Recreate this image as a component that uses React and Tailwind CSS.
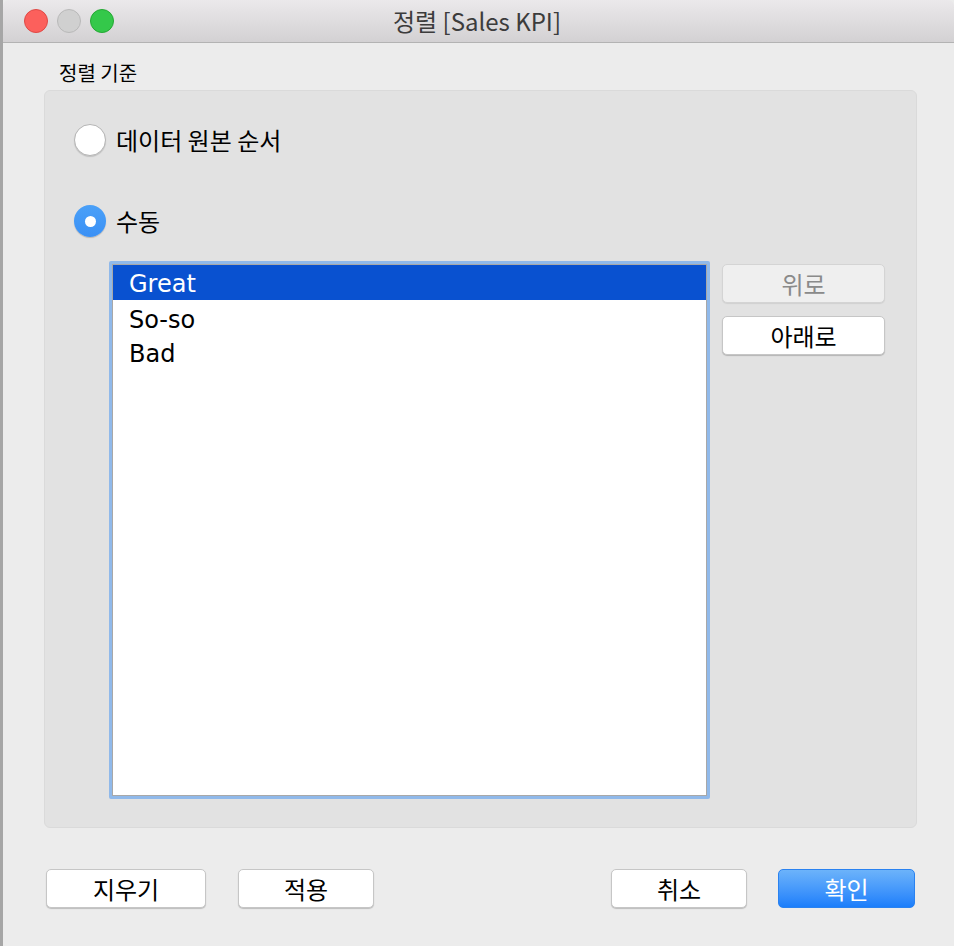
import React from "react";

const kr = { fontFamily: '"Noto Sans CJK KR", "Noto Sans", sans-serif' };
const lucida = { fontFamily: '"DejaVu Sans", "Noto Sans CJK KR", sans-serif' };

function TrafficLight({ color }) {
  return <div className={`w-[24px] h-[24px] rounded-full border ${color}`} />;
}

function Radio({ checked, label }) {
  return (
    <div className="flex items-center">
      {checked ? (
        <div className="w-[32px] h-[32px] rounded-full bg-gradient-to-b from-[#4aa0f8] to-[#3a90f5] flex items-center justify-center shadow-[0_1px_1px_rgba(0,0,0,0.2)]">
          <div className="w-[11px] h-[11px] rounded-full bg-white" />
        </div>
      ) : (
        <div className="w-[32px] h-[32px] rounded-full bg-white border border-[#b5b5b5] shadow-[0_1px_1px_rgba(0,0,0,0.15)]" />
      )}
      <span className="ml-[10px] text-[24px] text-black leading-none" style={kr}>
        {label}
      </span>
    </div>
  );
}

function Button({ children, className = "", primary, disabled }) {
  let look = "bg-white text-black border border-[#c6c6c6] shadow-[0_1px_1px_rgba(0,0,0,0.2)]";
  if (primary) look = "bg-gradient-to-b from-[#6cb3fa] to-[#1a7efb] text-white border border-[#2a82f0]";
  if (disabled) look = "bg-[#efefef] text-[#8a8a8a] border border-[#d4d4d4] shadow-[0_1px_1px_rgba(0,0,0,0.08)]";
  return (
    <div
      className={`h-[39px] rounded-[5px] flex items-center justify-center text-[24px] leading-none ${look} ${className}`}
      style={kr}
    >
      {children}
    </div>
  );
}

export default function App() {
  const items = ["Great", "So-so", "Bad"];
  return (
    <div className="flex w-[954px] h-[946px] bg-[#ececec]">
      <div className="w-[3px] h-full bg-[#a6a6a6]" />
      <div className="flex-1 h-[943px] flex flex-col bg-[#ececec] rounded-t-[6px] overflow-hidden">
        {/* title bar */}
        <div className="relative h-[43px] shrink-0 flex items-center bg-gradient-to-b from-[#ebe9eb] to-[#d3d1d3] border-b border-[#b3b3b3] pl-[21px] gap-[9px]">
          <TrafficLight color="bg-[#fc605c] border-[#df4945]" />
          <TrafficLight color="bg-[#d0d0d0] border-[#b9b9b9]" />
          <TrafficLight color="bg-[#34c84a] border-[#25a834]" />
          <div
            className="absolute inset-0 flex items-center justify-center text-[24px] text-[#3c3c3c] pr-[3px]"
            style={kr}
          >
            정렬 [Sales KPI]
          </div>
        </div>

        {/* body */}
        <div className="flex-1 flex flex-col pl-[41px] pr-[37px]">
          <div className="ml-[15px] mt-[18px] h-[24px] text-[20px] leading-[24px] text-black" style={kr}>
            정렬 기준
          </div>
          <div className="mt-[5px] h-[738px] bg-[#e2e2e2] rounded-[6px] border border-[#dadada] pt-[33px] pl-[29px]">
            <Radio label="데이터 원본 순서" />
            <div className="mt-[49px]">
              <Radio checked label="수동" />
            </div>
            <div className="flex mt-[24px] ml-[35px]">
              <div className="w-[601px] h-[538px] border-[3px] border-[#90b9ea] rounded-[2px]">
                <div className="w-full h-full bg-white border border-[#a8a8a8]">
                  {items.map((it, i) => (
                    <div
                      key={it}
                      className={`flex items-center pl-[16px] text-[24px] leading-none ${
                        i === 0 ? "bg-[#0951d0] text-white h-[35px] pt-[2px]" : "text-black h-[34px] pt-[6px]"
                      }`}
                      style={lucida}
                    >
                      {it}
                    </div>
                  ))}
                </div>
              </div>
              <div className="ml-[12px] pt-[3px] flex flex-col gap-[13px]">
                <Button disabled className="w-[163px]">위로</Button>
                <Button className="w-[163px]">아래로</Button>
              </div>
            </div>
          </div>

          {/* bottom buttons */}
          <div className="mt-[41px] flex justify-between pl-[2px] pr-[2px]">
            <div className="flex gap-[32px]">
              <Button className="w-[160px]">지우기</Button>
              <Button className="w-[136px]">적용</Button>
            </div>
            <div className="flex gap-[31px]">
              <Button className="w-[136px]">취소</Button>
              <Button primary className="w-[137px]">확인</Button>
            </div>
          </div>
        </div>
      </div>
    </div>
  );
}
